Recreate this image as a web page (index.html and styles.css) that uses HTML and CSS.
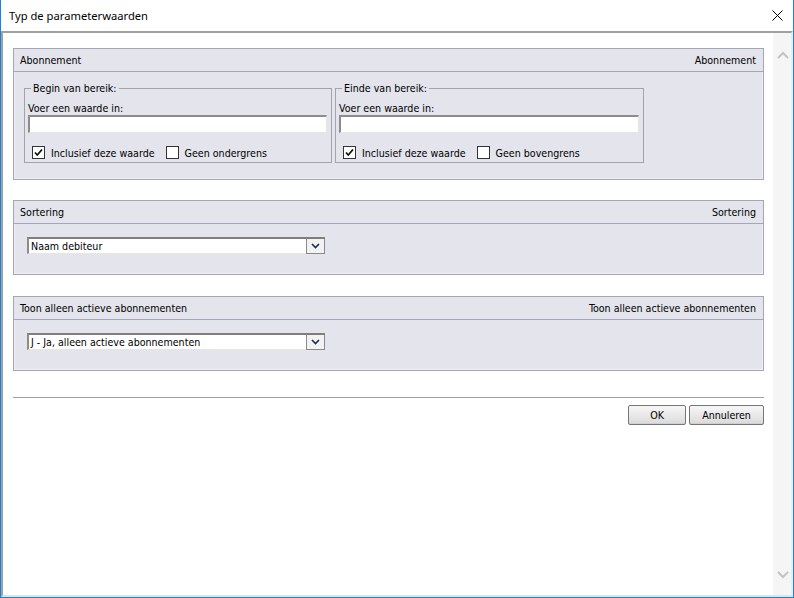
FILE: index.html
```html
<!DOCTYPE html>
<html lang="nl">
<head>
<meta charset="utf-8">
<title>Typ de parameterwaarden</title>
<link rel="stylesheet" href="styles.css">
</head>
<body>
<div class="window">
  <div class="titlebar">
    <span class="title">Typ de parameterwaarden</span>
    <svg class="close" width="11" height="11" viewBox="0 0 11 11"><path d="M0.5 0.5 L10.5 10.5 M10.5 0.5 L0.5 10.5" stroke="#000" stroke-width="1" fill="none"/></svg>
  </div>
  <div class="frame">
    <div class="main">
      <div class="panel">
        <div class="panel-head"><span>Abonnement</span><span>Abonnement</span></div>
        <div class="panel-body range-body">
          <fieldset class="group">
            <legend>Begin van bereik:</legend>
            <div class="field-label">Voer een waarde in:</div>
            <div class="textbox"></div>
            <div class="checks">
              <span class="check on"><svg width="11" height="11" viewBox="0 0 11 11"><path d="M2 5.5 L4.3 8 L9 2.5" stroke="#111" stroke-width="1.8" fill="none"/></svg></span>
              <span class="check-label">Inclusief deze waarde</span>
              <span class="check second"></span>
              <span class="check-label">Geen ondergrens</span>
            </div>
          </fieldset>
          <fieldset class="group">
            <legend>Einde van bereik:</legend>
            <div class="field-label">Voer een waarde in:</div>
            <div class="textbox"></div>
            <div class="checks">
              <span class="check on"><svg width="11" height="11" viewBox="0 0 11 11"><path d="M2 5.5 L4.3 8 L9 2.5" stroke="#111" stroke-width="1.8" fill="none"/></svg></span>
              <span class="check-label">Inclusief deze waarde</span>
              <span class="check second"></span>
              <span class="check-label">Geen bovengrens</span>
            </div>
          </fieldset>
        </div>
      </div>

      <div class="panel panel-sort">
        <div class="panel-head"><span>Sortering</span><span>Sortering</span></div>
        <div class="panel-body select-body">
          <div class="select">
            <span class="select-text">Naam debiteur</span>
            <span class="select-btn"><svg width="9" height="6" viewBox="0 0 9 6"><path d="M1 1 L4.5 4.5 L8 1" stroke="#1a2a55" stroke-width="1.6" fill="none"/></svg></span>
          </div>
        </div>
      </div>

      <div class="panel panel-active">
        <div class="panel-head"><span>Toon alleen actieve abonnementen</span><span>Toon alleen actieve abonnementen</span></div>
        <div class="panel-body select-body">
          <div class="select">
            <span class="select-text">J - Ja, alleen actieve abonnementen</span>
            <span class="select-btn"><svg width="9" height="6" viewBox="0 0 9 6"><path d="M1 1 L4.5 4.5 L8 1" stroke="#1a2a55" stroke-width="1.6" fill="none"/></svg></span>
          </div>
        </div>
      </div>

      <div class="separator"></div>
      <div class="buttons">
        <button class="btn btn-ok">OK</button>
        <button class="btn btn-cancel">Annuleren</button>
      </div>
    </div>
    <div class="scrollbar">
      <svg width="12" height="8" viewBox="0 0 12 8"><path d="M1 7 L6 2 L11 7" stroke="#c3c3c3" stroke-width="2" fill="none"/></svg>
      <svg width="12" height="8" viewBox="0 0 12 8"><path d="M1 1 L6 6 L11 1" stroke="#c3c3c3" stroke-width="2" fill="none"/></svg>
    </div>
  </div>
</div>
</body>
</html>
```
FILE: styles.css
```css
* { box-sizing: border-box; }
html, body { margin: 0; padding: 0; background: #fff; }
body {
  font-family: "DejaVu Sans Condensed", "Liberation Sans", sans-serif;
  font-size: 10.6px;
  color: #000;
}
.window {
  width: 794px;
  height: 598px;
  border: 1px solid #1883d7;
  border-top: none;
  display: flex;
  flex-direction: column;
  background: #fff;
}
.titlebar {
  height: 31px;
  flex: none;
  display: flex;
  align-items: center;
  justify-content: space-between;
  padding: 0 10px 0 8px;
}
.title {
  font-family: "Noto Sans", "Open Sans", sans-serif;
  font-size: 11.2px;
  color: #000;
}
.close { display: block; }
.frame {
  flex: 1;
  display: flex;
  border-top: 2px solid #a0a0a0;
  border-left: 2px solid #a0a0a0;
  border-right: 2px solid #ececec;
  border-bottom: 2px solid #e3e3e3;
  min-height: 0;
}
.main {
  flex: 1;
  padding: 15px 9px 0 10px;
}
.scrollbar {
  width: 18px;
  flex: none;
  background: #f5f5f5;
  display: flex;
  flex-direction: column;
  justify-content: space-between;
  align-items: center;
  padding: 18px 0 16px 2px;
}
.scrollbar svg { display: block; }

.panel {
  border: 1px solid #a6a6bb;
  background: #e4e4ec;
}
.panel-sort { margin-top: 20px; }
.panel-active { margin-top: 21px; }
.panel-head {
  height: 23px;
  display: flex;
  align-items: center;
  justify-content: space-between;
  padding: 0 7px 0 6px;
  border-bottom: 1px solid #a6a6bb;
}
.panel-body {
  border: 1px solid #ededf3;
  border-top: none;
}
.range-body {
  display: flex;
  gap: 3px;
  padding: 10px 9px 15px 9px;
}
.group {
  width: 308px;
  margin: 0;
  padding: 0 4px 1px 3px;
  border: 1px solid #a3a3ad;
}
.group:last-child { width: 309px; }
.group legend {
  padding: 0 2px;
  margin-left: 3px;
  line-height: 13px;
}
.field-label {
  margin-top: 6px;
  line-height: 14px;
}
.textbox {
  height: 18px;
  background: #fff;
  border-top: 2px solid #8c8c8c;
  border-left: 2px solid #8c8c8c;
  border-right: 1px solid #e6e6e6;
  border-bottom: 1px solid #e6e6e6;
}
.checks {
  margin-top: 11px;
  height: 17px;
  display: flex;
  align-items: center;
  padding-left: 4px;
}
.check {
  width: 13px;
  height: 13px;
  border: 1px solid #333;
  background: #fff;
  display: flex;
  align-items: center;
  justify-content: center;
  flex: none;
}
.check svg { display: block; }
.check-label { margin-left: 6px; }
.check.second { margin-left: 11px; }

.select-body {
  padding: 13px 12px 19px 12px;
}
.select {
  width: 298px;
  height: 17px;
  background: #fff;
  border-top: 2px solid #7e7e7e;
  border-left: 2px solid #8c8c8c;
  border-bottom: 1px solid #e6e6e6;
  display: flex;
  align-items: center;
  justify-content: space-between;
}
.select-text {
  padding-left: 2px;
  line-height: 14px;
}
.select-btn {
  width: 19px;
  height: 15px;
  border: 1px solid #8a8a8a;
  border-top: none;
  background: #f2f2f2;
  display: flex;
  align-items: center;
  justify-content: center;
}
.select-btn svg { display: block; }

.separator {
  margin-top: 26px;
  height: 1px;
  background: #a0a0a0;
}
.buttons {
  margin-top: 7px;
  display: flex;
  justify-content: flex-end;
  gap: 3px;
}
.btn {
  font-family: "DejaVu Sans Condensed", "Liberation Sans", sans-serif;
  font-size: 10.6px;
  color: #000;
  height: 20px;
  padding: 0;
  border: 1px solid #767676;
  border-radius: 2px;
  background: linear-gradient(#f7f7f7, #e6e6e6 60%, #dadada);
  box-shadow: inset 0 -1px 0 #cfcfcf;
}
.btn-ok { width: 58px; }
.btn-cancel { width: 75px; }
```
